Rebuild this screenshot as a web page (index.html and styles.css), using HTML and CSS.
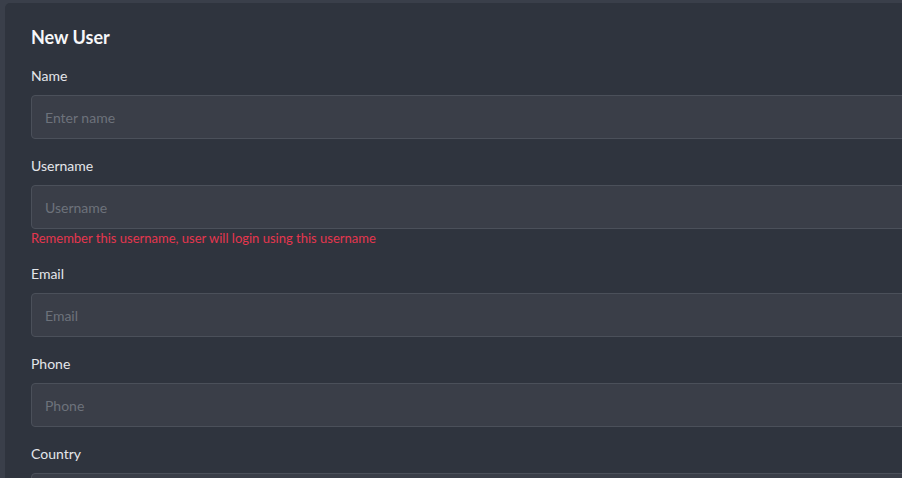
FILE: index.html
```html
<!DOCTYPE html>
<html lang="en">
<head>
    <meta charset="UTF-8">
    <meta name="viewport" content="width=device-width, initial-scale=1.0">
    <title>New User</title>
    <link rel="stylesheet" href="styles.css">
</head>
<body>
    <div class="page">
        <div class="card">
            <h1 class="card-title">New User</h1>

            <form class="user-form">
                <div class="form-group">
                    <label for="name">Name</label>
                    <input type="text" id="name" placeholder="Enter name">
                </div>
                <div class="form-group">
                    <label for="username">Username</label>
                    <input type="text" id="username" placeholder="Username">
                    <div class="hint">Remember this username, user will login using this username</div>
                </div>
                <div class="form-group">
                    <label for="email">Email</label>
                    <input type="email" id="email" placeholder="Email">
                </div>
                <div class="form-group">
                    <label for="phone">Phone</label>
                    <input type="text" id="phone" placeholder="Phone">
                </div>
                <div class="form-group">
                    <label for="country">Country</label>
                    <input type="text" id="country">
                </div>
            </form>
        </div>
    </div>
</body>
</html>
```

FILE: styles.css
```css
html, body {
    margin: 0;
    height: 100%;
    overflow: hidden;
}
body {
    background-color: #3a3f4a;
    font-family: Lato, "Open Sans", sans-serif;
    color: #e4e6ea;
}
.page {
    padding: 3px 0 0 5px;
    height: 100%;
    box-sizing: border-box;
}
.card {
    width: 1000px;
    height: 100%;
    box-sizing: border-box;
    background-color: #2f343e;
    border-radius: 5px 0 0 0;
    padding: 21px 0 0 26px;
}
.card-title {
    margin: 0 0 15px;
    font-size: 18px;
    font-weight: 700;
    line-height: 26px;
    color: #f6f7f9;
}
.form-group {
    margin-bottom: 16px;
}
.form-group label {
    display: block;
    font-size: 14px;
    line-height: 22px;
    margin-bottom: 8px;
}
.form-group input {
    display: block;
    width: 100%;
    height: 44px;
    box-sizing: border-box;
    padding: 0 13px;
    background-color: #3a3e48;
    border: 1px solid #4b505a;
    border-radius: 4px;
    font-family: inherit;
    font-size: 14px;
    color: #e4e6ea;
}
.form-group input::placeholder {
    color: #6d727b;
}
.hint {
    font-size: 13px;
    line-height: 18px;
    color: #e5364e;
}
```
